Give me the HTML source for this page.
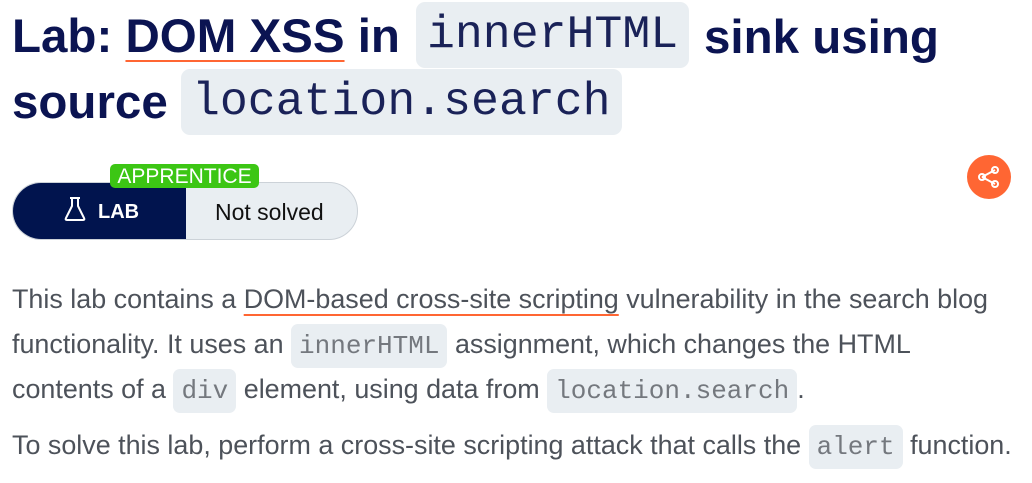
<!DOCTYPE html>
<html><head><meta charset="utf-8"><style>
*{margin:0;padding:0;box-sizing:border-box}
body{width:1032px;height:483px;background:#fff;position:relative;overflow:hidden;font-family:"Liberation Sans",Arial,sans-serif}
.t{position:absolute;left:12px;font-weight:bold;font-size:47.5px;color:#0b1452;white-space:nowrap;line-height:1}
.tc{position:absolute;background:#e9eef2;border-radius:9px;font-family:"Liberation Mono",monospace;font-weight:normal;font-size:46.5px;color:#1a2258;line-height:66px;padding:0 11px}
.u{text-decoration:underline;text-decoration-color:#ff6633;text-decoration-thickness:1.5px;text-underline-offset:8px}
.p{position:absolute;left:12px;font-size:26.9px;color:#4d525a;white-space:nowrap;line-height:30px}
.c{background:#e9eef2;border-radius:7px;font-family:"Liberation Mono",monospace;font-size:26px;color:#74787e;padding:7px 8px}
.pu{text-decoration:underline;text-decoration-color:#ff6633;text-decoration-thickness:1.5px;text-underline-offset:6px}
</style></head><body>
<div class="t" style="top:13px">Lab: <span class="u">DOM XSS</span> in</div>
<div class="tc" style="left:416px;top:2px">innerHTML</div>
<div class="t" style="top:14px;left:704px">sink using</div>
<div class="t" style="top:79px">source</div>
<div class="tc" style="left:181px;top:69px">location.search</div>

<div style="position:absolute;left:12px;top:182px;width:346px;height:58px;border-radius:29px;overflow:hidden;background:#e9eef2;border:1px solid #ccd2d8">
 <div style="position:absolute;left:0;top:0;width:173px;height:58px;background:#01144e"></div>
 <svg style="position:absolute;left:51px;top:13px" width="22" height="26" viewBox="0 0 22 26"><path d="M6 2h10M8 2v8L2 22q-1 2 1 2h16q2 0 1-2L14 10V2" fill="none" stroke="#fff" stroke-width="2" stroke-linejoin="round"/></svg>
 <div style="position:absolute;left:85px;top:18px;color:#fff;font-weight:bold;font-size:20px">LAB</div>
 <div style="position:absolute;left:202px;top:16px;color:#111;font-size:23px">Not solved</div>
</div>
<div style="position:absolute;left:110px;top:164px;width:149px;height:24px;background:#3cc614;border-radius:5px;color:#fff;font-size:21px;line-height:25px;text-align:center">APPRENTICE</div>

<div style="position:absolute;left:967px;top:155px;width:44px;height:44px;border-radius:50%;background:#ff6633"></div>
<svg style="position:absolute;left:967px;top:155px" width="44" height="44" viewBox="0 0 44 44"><path d="M15 22L28 15M15 22L28 29" stroke="#fff" stroke-width="2"/><circle cx="15" cy="22" r="3" fill="none" stroke="#fff" stroke-width="2"/><circle cx="28" cy="15" r="3" fill="none" stroke="#fff" stroke-width="2"/><circle cx="28" cy="29" r="3" fill="none" stroke="#fff" stroke-width="2"/></svg>

<div class="p" style="top:284px">This lab contains a <span class="pu">DOM-based cross-site scripting</span> vulnerability in the search blog</div>
<div class="p" style="top:329px">functionality. It uses an <span class="c">innerHTML</span> assignment, which changes the HTML</div>
<div class="p" style="top:374px">contents of a <span class="c">div</span> element, using data from <span class="c">location.search</span>.</div>
<div class="p" style="top:430px">To solve this lab, perform a cross-site scripting attack that calls the <span class="c">alert</span> function.</div>
</body></html>
